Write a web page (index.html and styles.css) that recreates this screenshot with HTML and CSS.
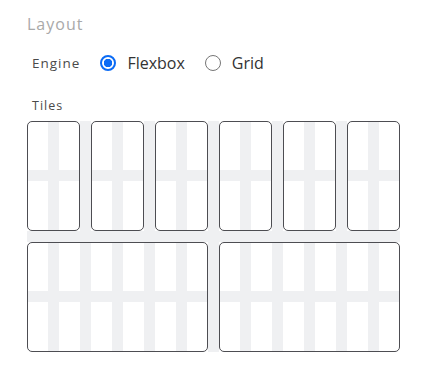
FILE: index.html
```html
<!DOCTYPE html>
<html lang="en">
<head>
  <meta charset="UTF-8">
  <title>Layout</title>
  <link rel="stylesheet" href="styles.css">
</head>
<body>
  <div class="panel">
    <h2 class="panel-title">Layout</h2>

    <div class="engine-row">
      <span class="field-label">Engine</span>
      <label class="radio">
        <input type="radio" name="engine" checked>
        <span>Flexbox</span>
      </label>
      <label class="radio">
        <input type="radio" name="engine">
        <span>Grid</span>
      </label>
    </div>

    <div class="field-label tiles-label">Tiles</div>

    <!-- 12 x 4 overlay grid, tiles sit on the same tracks -->
    <div class="tiles">
      <div class="tile"></div>
      <div class="tile"></div>
      <div class="tile"></div>
      <div class="tile"></div>
      <div class="tile"></div>
      <div class="tile"></div>
      <div class="tile wide"></div>
      <div class="tile wide"></div>
    </div>
  </div>
</body>
</html>
```

FILE: styles.css
```css
body {
  margin: 0;
  background: #fff;
  font-family: 'Open Sans', 'Noto Sans', sans-serif;
  color: #333;
}
.panel {
  padding: 13px 0 0 27px;
}
.panel-title {
  margin: 0;
  font-size: 16px;
  font-weight: 400;
  line-height: 22px;
  letter-spacing: 1px;
  color: #a9a9a9;
}
.engine-row {
  display: flex;
  align-items: center;
  gap: 20px;
  margin: 16px 0 0 5px;
  height: 24px;
}
.field-label {
  font-size: 13.5px;
  letter-spacing: 1px;
  color: #4a4a4a;
}
.engine-row .field-label {
  margin-right: 0;
}
.radio {
  display: flex;
  align-items: center;
  gap: 11px;
  font-size: 16px;
  color: #333;
}
.radio input {
  appearance: none;
  margin: 0;
  width: 16px;
  height: 16px;
  border-radius: 50%;
  border: 1px solid #767676;
  background: #fff;
}
.radio input:checked {
  border: 2px solid #0b6bf5;
  background: radial-gradient(circle, #0b6bf5 0 4px, #fff 4.5px);
}
.tiles-label {
  margin: 22px 0 0 5px;
  font-size: 12.5px;
  line-height: 18px;
}
.tiles {
  margin-top: 6px;
  width: 373px;
  display: grid;
  grid-template-columns: repeat(12, 21px);
  grid-template-rows: repeat(4, 49.5px);
  gap: 11px;
  background:
    repeating-linear-gradient(to bottom, transparent 0 49.5px, #eff0f2 49.5px 60.5px),
    repeating-linear-gradient(to right, transparent 0 21px, #eff0f2 21px 32px),
    #fff;
}
.tile {
  grid-column: span 2;
  grid-row: 1 / span 2;
  border: 1.5px solid #4d4d52;
  border-radius: 5px;
}
.tile.wide {
  grid-column: span 6;
  grid-row: 3 / span 2;
}
```
